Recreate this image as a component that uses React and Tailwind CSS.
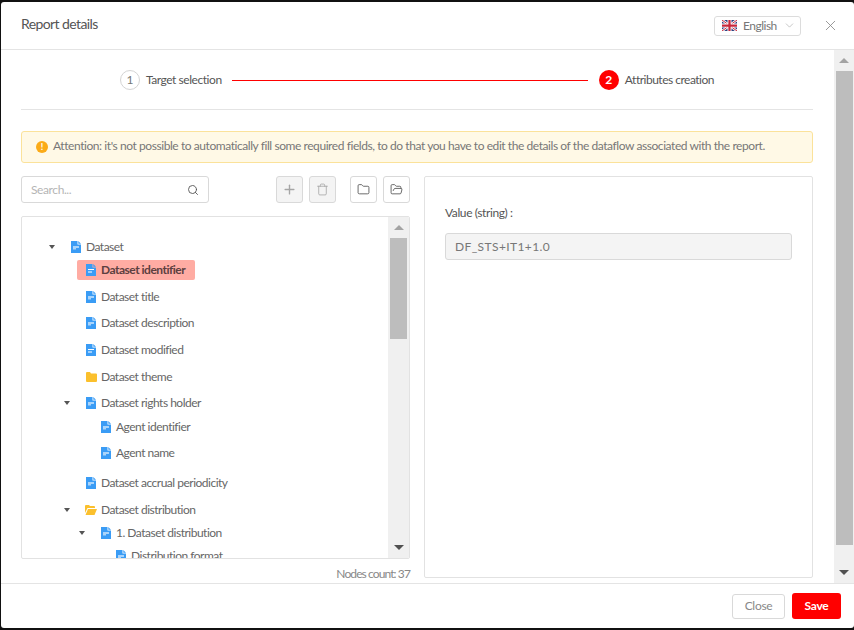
import { Search, X, ChevronDown, Plus, Trash, Folder, FolderOpen } from 'lucide-react';

const FONT = "font-['Lato','Open_Sans',sans-serif]";

const rows = [
    { label: 'Dataset', pad: 'pl-[30px]', icon: 'file', caret: true, height: 'h-[24px]', mt: 'mt-[18px]' },
    { label: 'Dataset identifier', pad: 'pl-[45px]', icon: 'fileLines', selected: true, height: 'h-[22px]' },
    { label: 'Dataset title', pad: 'pl-[45px]', icon: 'file', height: 'h-[28px]', mt: 'mt-[2px]' },
    { label: 'Dataset description', pad: 'pl-[45px]', icon: 'file', height: 'h-[24px]' },
    { label: 'Dataset modified', pad: 'pl-[45px]', icon: 'fileLines', height: 'h-[28px]', mt: 'mt-[1px]' },
    { label: 'Dataset theme', pad: 'pl-[45px]', icon: 'folder', height: 'h-[26px]' },
    { label: 'Dataset rights holder', pad: 'pl-[45px]', icon: 'file', caret: true, height: 'h-[26px]' },
    { label: 'Agent identifier', pad: 'pl-[60px]', icon: 'file', height: 'h-[22px]' },
    { label: 'Agent name', pad: 'pl-[60px]', icon: 'file', height: 'h-[26px]', mt: 'mt-[2px]' },
    { label: 'Dataset accrual periodicity', pad: 'pl-[45px]', icon: 'file', height: 'h-[26px]', mt: 'mt-[4px]' },
    { label: 'Dataset distribution', pad: 'pl-[45px]', icon: 'folderOpen', caret: true, height: 'h-[26px]', mt: 'mt-[1px]' },
    { label: '1. Dataset distribution', pad: 'pl-[60px]', icon: 'file', caret: true, height: 'h-[20px]' },
    { label: 'Distribution format', pad: 'pl-[75px]', icon: 'file', height: 'h-[26px]' },
];

function FileIcon({ lines }) {
    return (
        <svg width="10" height="12" viewBox="0 0 10 12" className="shrink-0">
            <path d="M0 0h6.500v3.500H10V12H0z" fill="#3a9cf5" />
            <path d="M7.300 0L10 2.700H7.300z" fill="#3a9cf5" />
            {lines ? (
                <path d="M2 5.500h6M2 8h4" stroke="#fff" strokeWidth="1" />
            ) : (
                <path d="M2 5h6v2H5v1.500H2z" fill="#a9d4fb" />
            )}
        </svg>
    );
}

function FolderIcon({ open }) {
    if (open) {
        return (
            <svg width="12" height="10" viewBox="0 0 12 10" className="shrink-0 -ml-[1px] -mr-[1px]">
                <path d="M0 1a1 1 0 011-1h3l1 1h4a1 1 0 011 1v1H2.500L0 8z" fill="#fbc02d" />
                <path d="M3 4h9l-2.500 6H0.500z" fill="#fbc02d" />
            </svg>
        );
    }
    return (
        <svg width="11" height="10" viewBox="0 0 11 10" className="shrink-0 -mr-[1px]">
            <path d="M0 1a1 1 0 011-1h3l1 1.500h5a1 1 0 011 1V9a1 1 0 01-1 1H1a1 1 0 01-1-1z" fill="#fbc02d" />
        </svg>
    );
}

function NodeIcon({ icon }) {
    if (icon === 'folder') return <FolderIcon />;
    if (icon === 'folderOpen') return <FolderIcon open />;
    return <FileIcon lines={icon === 'fileLines'} />;
}

function TreeRow({ row }) {
    return (
        <div className={`flex items-center shrink-0 ${row.pad} ${row.height} ${row.mt || ''}`}>
            <div className="w-[21px] -ml-[2px] shrink-0">
                {row.caret && <div className="-ml-[1px] w-0 h-0 border-x-[3.5px] border-x-transparent border-t-[4px] border-t-[#555]" />}
            </div>
            <div className={row.selected
                ? 'flex items-center gap-[5px] -ml-[9px] pl-[9px] pr-[10px] h-[20px] rounded-[2px] bg-[#ffaca3]'
                : 'flex items-center gap-[5px]'}>
                <NodeIcon icon={row.icon} />
                <span className={`text-[12px] whitespace-nowrap tracking-[-0.5px] ${row.selected ? 'font-bold text-[#5c4040]' : 'text-[#666]'}`}>{row.label}</span>
            </div>
        </div>
    );
}

function Scrollbar({ outerClass, thumbClass }) {
    return (
        <div className={`flex flex-col items-center bg-[#f0f0f0] shrink-0 ${outerClass}`}>
            <div className="h-[21px] shrink-0 flex items-center justify-center">
                <div className="w-0 h-0 border-x-[5px] border-x-transparent border-b-[5px] border-b-[#a3a3a3]" />
            </div>
            <div className={`w-[17px] bg-[#bdbdbd] shrink-0 ${thumbClass}`} />
            <div className="flex-1" />
            <div className="h-[21px] shrink-0 flex items-center justify-center">
                <div className="w-0 h-0 border-x-[5px] border-x-transparent border-t-[5px] border-t-[#505050]" />
            </div>
        </div>
    );
}

function ToolButton({ disabled, children }) {
    return (
        <button className={`w-[27px] h-[27px] flex items-center justify-center rounded-[3px] border border-[#d9d9d9] ${disabled ? 'bg-[#f4f4f4] text-[#a6a6a6]' : 'bg-white text-[#555]'}`}>
            {children}
        </button>
    );
}

function UkFlag() {
    return (
        <svg width="15" height="11" viewBox="0 0 30 22" className="shrink-0">
            <rect width="30" height="22" fill="#2b3f7e" />
            <path d="M0 0l30 22M30 0L0 22" stroke="#fff" strokeWidth="5" />
            <path d="M0 0l30 22M30 0L0 22" stroke="#c8283c" strokeWidth="2" />
            <path d="M15 0v22M0 11h30" stroke="#fff" strokeWidth="8" />
            <path d="M15 0v22M0 11h30" stroke="#c8283c" strokeWidth="4.500" />
        </svg>
    );
}

export default function App() {
    return (
        <div className={`w-[854px] h-[630px] bg-[#111] pt-[2px] pb-[2px] pl-[1px] overflow-hidden ${FONT}`}>
            <div className="h-full bg-white rounded-[3px] flex flex-col overflow-hidden">
                {/* header */}
                <div className="h-[48px] shrink-0 flex items-center justify-between pl-[20px] pr-[15px] border-b border-[#e4e4e4]">
                    <span className="text-[14px] text-[#555] tracking-[-0.6px] -mt-[5px]">Report details</span>
                    <div className="flex items-center gap-[21px]">
                        <div className="w-[87px] h-[20px] flex items-center pl-[7px] gap-[6px] border border-[#dcdcdc] rounded-[3px]">
                            <UkFlag />
                            <span className="text-[12px] text-[#777] tracking-[-0.5px]">English</span>
                            <ChevronDown size={13} strokeWidth={1} className="text-[#999]" />
                        </div>
                        <X size={17} strokeWidth={1.200} className="text-[#888]" />
                    </div>
                </div>

                {/* body */}
                <div className="flex-1 flex min-h-0">
                    <div className="flex-1 min-w-0 pl-[20px] pr-[21px] flex flex-col overflow-hidden">
                        {/* steps */}
                        <div className="h-[60px] shrink-0 flex items-center pl-[99px] pr-[99px] border-b border-[#e4e4e4]">
                            <div className="w-[20px] h-[20px] rounded-full border border-[#d4d4d4] flex items-center justify-center text-[12px] text-[#777]">1</div>
                            <span className="ml-[6px] text-[12px] text-[#555] tracking-[-0.45px] whitespace-nowrap">Target selection</span>
                            <div className="flex-1 h-[1px] mt-[2px] bg-[#ff0000] ml-[10px] mr-[11px]" />
                            <div className="w-[20px] h-[20px] rounded-full bg-[#ff0000] flex items-center justify-center text-[12px] font-bold text-white">2</div>
                            <span className="ml-[6px] text-[12px] text-[#555] tracking-[-0.5px] whitespace-nowrap">Attributes creation</span>
                        </div>

                        {/* alert */}
                        <div className="mt-[21px] h-[32px] shrink-0 flex items-center gap-[5px] pl-[14px] rounded-[3px] border border-[#fbe29a] bg-[#fff9e6]">
                            <div className="w-[12px] h-[12px] rounded-full bg-[#fbab18] text-white text-[9px] font-bold flex items-center justify-center">!</div>
                            <span className="text-[12px] text-[#777] tracking-[-0.43px] whitespace-nowrap -mt-[2px]">Attention: it's not possible to automatically fill some required fields, to do that you have to edit the details of the dataflow associated with the report.</span>
                        </div>

                        {/* two panels */}
                        <div className="mt-[13px] flex gap-[14px]">
                            <div className="w-[389px] shrink-0 flex flex-col">
                                <div className="flex items-center">
                                    <div className="w-[188px] h-[27px] flex items-center justify-between pl-[9px] pr-[9px] rounded-[3px] border border-[#d9d9d9]">
                                        <span className="text-[12px] text-[#b5b5b5] tracking-[-0.4px]">Search...</span>
                                        <Search size={12} strokeWidth={1.800} className="text-[#555]" />
                                    </div>
                                    <div className="ml-[67px] flex gap-[6px]">
                                        <ToolButton disabled><Plus size={15} strokeWidth={2.200} /></ToolButton>
                                        <ToolButton disabled><Trash size={13} strokeWidth={1.500} /></ToolButton>
                                    </div>
                                    <div className="ml-[14px] flex gap-[6px]">
                                        <ToolButton><Folder size={13} strokeWidth={1.600} /></ToolButton>
                                        <ToolButton><FolderOpen size={13} strokeWidth={1.600} /></ToolButton>
                                    </div>
                                </div>
                                <div className="mt-[13px] h-[343px] flex rounded-[2px] border border-[#e2e2e2] overflow-hidden">
                                    <div className="flex-1 min-w-0 flex flex-col overflow-hidden">
                                        {rows.map((row) => <TreeRow key={row.label} row={row} />)}
                                    </div>
                                    <Scrollbar outerClass="w-[21px]" thumbClass="h-[101px]" />
                                </div>
                                <div className="mt-[8px] text-right text-[12px] text-[#888] tracking-[-0.9px] leading-[14px]">Nodes count: 37</div>
                            </div>

                            <div className="flex-1 h-[402px] rounded-[2px] border border-[#e2e2e2] px-[20px] pt-[29px]">
                                <div className="text-[12px] text-[#555] tracking-[-0.4px] leading-[14px]">Value (string) :</div>
                                <div className="mt-[13px] h-[27px] flex items-center pl-[9px] rounded-[3px] border border-[#d9d9d9] bg-[#f4f4f4] text-[12px] text-[#777] tracking-[0.4px]">DF_STS+IT1+1.0</div>
                            </div>
                        </div>
                    </div>
                    <Scrollbar outerClass="w-[20px]" thumbClass="h-[474px]" />
                </div>

                {/* footer */}
                <div className="h-[45px] shrink-0 flex items-center justify-end gap-[7px] pr-[13px] border-t border-[#e4e4e4]">
                    <button className="w-[53px] h-[25px] rounded-[3px] border border-[#d9d9d9] bg-white text-[12px] text-[#888] tracking-[-0.3px]">Close</button>
                    <button className="w-[49px] h-[26px] rounded-[3px] bg-[#ff0000] text-[12px] font-bold text-white tracking-[-0.3px]">Save</button>
                </div>
            </div>
        </div>
    );
}
